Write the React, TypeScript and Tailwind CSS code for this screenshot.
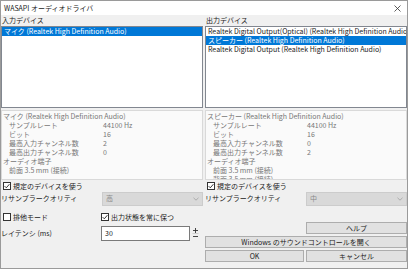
import React from "react";

const font = { fontFamily: '"Noto Sans CJK JP", "Noto Sans", sans-serif' };

const Check = ({ checked }: { checked: boolean }) => (
  <span className="w-[8px] h-[8px] border border-[#333333] bg-white flex items-center justify-center shrink-0">
    {checked && (
      <svg width="6" height="6" viewBox="0 0 6 6">
        <path d="M0.6 3.1 L2.3 4.8 L5.4 1.2" stroke="#222" strokeWidth="0.9" fill="none" />
      </svg>
    )}
  </span>
);

const Select = ({ value }: { value: string }) => (
  <div className="w-[101px] h-[14px] bg-[#d9d9d9] border border-[#cccccc] flex items-center justify-between px-[3px] text-[#8a8a8a]">
    <span>{value}</span>
    <svg width="6" height="4" viewBox="0 0 6 4">
      <path d="M0.5 0.8 L3 3.2 L5.5 0.8" stroke="#a0a0a0" strokeWidth="0.8" fill="none" />
    </svg>
  </div>
);

const Button = ({ label, className }: { label: string; className: string }) => (
  <div
    className={`h-[12px] bg-[#e1e1e1] border border-[#adadad] flex items-center justify-center text-[#222] ${className}`}
  >
    {label}
  </div>
);

const InfoBox = ({ name, rows, extra }: { name: string; rows: [string, string][]; extra?: boolean }) => (
  <div className="mt-[2px] h-[70px] bg-[#fafafa] border border-[#d9d9d9] overflow-hidden pt-[1px] pl-[1px] text-[#777777] leading-[9px]">
    <div>{name}</div>
    {rows.map(([k, v]) => (
      <div key={k} className="flex">
        <span className="w-[100px] pl-[6px]">{k}</span>
        <span>{v}</span>
      </div>
    ))}
    <div>オーディオ端子</div>
    <div className="pl-[6px]">前面 3.5 mm (接続)</div>
    {extra && <div className="pl-[6px]">背面 3.5 mm (接続)</div>}
  </div>
);

const DeviceColumn = ({
  label,
  items,
  selected,
  info,
  quality,
}: {
  label: string;
  items: string[];
  selected: number;
  info: React.ReactNode;
  quality: string;
}) => (
  <div className="w-[202px] flex flex-col">
    <div className="h-[11px] leading-[11px] pl-[1px] text-[#222]">{label}</div>
    <div className="h-[82px] bg-white border border-[#828790] overflow-hidden whitespace-nowrap leading-[9px]">
      {items.map((it, i) => (
        <div
          key={it}
          className={i === selected ? "bg-[#0078d7] text-white pl-[2px]" : "text-[#222] pl-[2px]"}
        >
          {it}
        </div>
      ))}
    </div>
    {info}
    <div className="h-[10px] flex items-center gap-[2px] pl-[2px] mt-[1px]">
      <Check checked />
      <span className="text-[#222]">規定のデバイスを使う</span>
    </div>
    <div className="h-[15px] flex items-center justify-between">
      <span className="text-[#222]">リサンプラークオリティ</span>
      <Select value={quality} />
    </div>
  </div>
);

export default function App() {
  return (
    <div
      style={font}
      className="w-[408px] h-[269px] bg-[#f0f0f0] border border-[#9a9a9a] text-[7px] overflow-hidden flex flex-col"
    >
      <div className="h-[14px] bg-white flex items-center justify-between pl-[3px] pr-[6px] shrink-0">
        <span className="text-[#222]">WASAPI オーディオドライバ</span>
        <svg width="7" height="7" viewBox="0 0 7 7">
          <path d="M0.5 0.5 L6.5 6.5 M6.5 0.5 L0.5 6.5" stroke="#333" strokeWidth="0.8" />
        </svg>
      </div>

      <div className="flex gap-[2px]">
        <DeviceColumn
          label="入力デバイス"
          items={["マイク (Realtek High Definition Audio)"]}
          selected={0}
          quality="高"
          info={
            <InfoBox
              name="マイク (Realtek High Definition Audio)"
              rows={[
                ["サンプルレート", "44100 Hz"],
                ["ビット", "16"],
                ["最高入力チャンネル数", "2"],
                ["最高出力チャンネル数", "0"],
              ]}
            />
          }
        />
        <DeviceColumn
          label="出力デバイス"
          items={[
            "Realtek Digital Output(Optical) (Realtek High Definition Audio)",
            "スピーカー (Realtek High Definition Audio)",
            "Realtek Digital Output (Realtek High Definition Audio)",
          ]}
          selected={1}
          quality="中"
          info={
            <InfoBox
              name="スピーカー (Realtek High Definition Audio)"
              rows={[
                ["サンプルレート", "44100 Hz"],
                ["ビット", "16"],
                ["最高入力チャンネル数", "0"],
                ["最高出力チャンネル数", "2"],
              ]}
              extra
            />
          }
        />
      </div>

      <div className="flex gap-[2px] flex-1">
        <div className="w-[202px] flex flex-col">
          <div className="h-[10px] mt-[6px] flex items-center">
            <div className="w-[100px] flex items-center gap-[2px] pl-[2px]">
              <Check checked={false} />
              <span className="text-[#222]">排他モード</span>
            </div>
            <div className="flex items-center gap-[2px]">
              <Check checked />
              <span className="text-[#222]">出力状態を常に保つ</span>
            </div>
          </div>
          <div className="h-[15px] mt-[4px] flex items-center">
            <span className="w-[100px] text-[#222]">レイテンシ (ms)</span>
            <div className="w-[89px] h-[15px] bg-white border border-[#7a7a7a] flex items-center pl-[3px] text-[#222]">
              30
            </div>
            <div className="w-[11px] h-[15px] flex items-center justify-center">
              <svg width="7" height="13" viewBox="0 0 7 13">
                <path d="M3.5 1 V6 M1 3.5 H6" stroke="#333" strokeWidth="0.9" />
                <path d="M0.5 6.5 H6.5" stroke="#c8c8c8" strokeWidth="0.8" />
                <path d="M1 9.5 H6" stroke="#333" strokeWidth="0.9" />
              </svg>
            </div>
          </div>
        </div>
        <div className="w-[202px] flex flex-col gap-[2px] pt-[16px]">
          <div className="flex justify-end">
            <Button label="ヘルプ" className="w-[101px]" />
          </div>
          <Button label="Windows のサウンドコントロールを開く" className="w-full" />
          <div className="flex justify-between">
            <Button label="OK" className="w-[99px]" />
            <Button label="キャンセル" className="w-[101px]" />
          </div>
        </div>
      </div>
    </div>
  );
}
